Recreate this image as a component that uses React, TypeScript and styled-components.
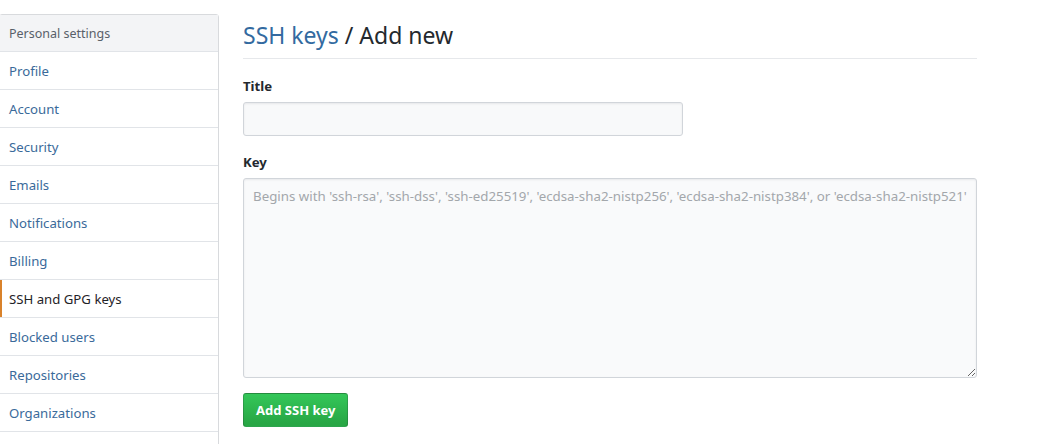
import styled, { createGlobalStyle } from "styled-components";

const GlobalStyle = createGlobalStyle`
  html, body {
    margin: 0;
    padding: 0;
    background: #fff;
  }
  body {
    font-family: "Noto Sans", "Open Sans", sans-serif;
    font-size: 13px;
    color: #24292e;
    overflow: hidden;
  }
`;

const Page = styled.div`
  display: flex;
  align-items: flex-start;
  padding-top: 14px;
  width: 1060px;
  height: 444px;
  box-sizing: border-box;
  overflow: hidden;
`;

const Menu = styled.nav`
  flex: none;
  width: 220px;
  margin-left: -1px;
  border: 1px solid #d8dadd;
  border-radius: 3px;
  box-sizing: border-box;
  background: #fff;
`;

const MenuHeading = styled.div`
  height: 37px;
  padding: 0 9px;
  display: flex;
  align-items: center;
  font-size: 12.5px;
  color: #586069;
  background: #f3f4f6;
  border-bottom: 1px solid #e1e4e8;
  box-sizing: border-box;
`;

const MenuItem = styled.a<{ $selected?: boolean }>`
  position: relative;
  display: flex;
  align-items: center;
  height: 38px;
  padding: 0 9px;
  box-sizing: border-box;
  border-bottom: 1px solid #e1e4e8;
  color: ${(p) => (p.$selected ? "#1f2328" : "#3a6a9a")};
  text-decoration: none;
  font-size: 13.2px;
  cursor: pointer;

  &::before {
    content: "";
    display: ${(p) => (p.$selected ? "block" : "none")};
    position: absolute;
    left: 0;
    top: 0;
    bottom: 0;
    width: 2px;
    background: #d9822b;
  }
`;

const Main = styled.main`
  flex: none;
  width: 734px;
  margin-left: 24px;
`;

const Subhead = styled.div`
  padding-top: 6px;
  padding-bottom: 8px;
  border-bottom: 1px solid #e6e8eb;
`;

const Heading = styled.h2`
  margin: 0;
  font-size: 23px;
  font-weight: 400;
  line-height: 30px;
  color: #24292e;
`;

const HeadingLink = styled.a`
  color: #336aa0;
  text-decoration: none;
`;

const FormGroup = styled.dl<{ $top: number }>`
  margin: ${(p) => p.$top}px 0 0;
`;

const Label = styled.dt`
  font-size: 13.2px;
  font-weight: 700;
  line-height: 20px;
  margin-bottom: 6px;
  color: #24292e;
`;

const Field = styled.dd`
  margin: 0;
`;

const TextInput = styled.input`
  display: block;
  width: 440px;
  height: 34px;
  box-sizing: border-box;
  padding: 6px 8px;
  font: inherit;
  font-size: 13px;
  background: #f8f9fa;
  border: 1px solid #d1d5da;
  border-radius: 3px;
  box-shadow: inset 0 1px 2px rgba(27, 31, 35, 0.075);
  outline: none;
`;

const TextArea = styled.textarea`
  display: block;
  width: 734px;
  height: 200px;
  box-sizing: border-box;
  padding: 7px 9px;
  font-family: inherit;
  font-size: 13.3px;
  line-height: 20px;
  background: #f9fafb;
  border: 1px solid #d1d5da;
  border-radius: 3px;
  box-shadow: inset 0 1px 2px rgba(27, 31, 35, 0.075);
  outline: none;
  resize: both;

  &::placeholder {
    color: #a3a7ab;
  }
`;

const Button = styled.button`
  display: block;
  margin-top: 15px;
  height: 34px;
  padding: 0 12px;
  font-family: inherit;
  font-size: 13px;
  font-weight: 700;
  color: #fff;
  background: linear-gradient(-180deg, #34c759 0%, #28a745 90%);
  border: 1px solid rgba(27, 31, 35, 0.2);
  border-radius: 3px;
  cursor: pointer;
`;

const items = [
  "Profile",
  "Account",
  "Security",
  "Emails",
  "Notifications",
  "Billing",
  "SSH and GPG keys",
  "Blocked users",
  "Repositories",
  "Organizations",
  "Saved replies",
];

export default function App() {
  return (
    <>
      <GlobalStyle />
      <Page>
        <Menu>
          <MenuHeading>Personal settings</MenuHeading>
          {items.map((item) => (
            <MenuItem key={item} $selected={item === "SSH and GPG keys"}>
              {item}
            </MenuItem>
          ))}
        </Menu>
        <Main>
          <Subhead>
            <Heading>
              <HeadingLink>SSH keys</HeadingLink> / Add new
            </Heading>
          </Subhead>
          <FormGroup $top={17}>
            <Label>Title</Label>
            <Field>
              <TextInput type="text" />
            </Field>
          </FormGroup>
          <FormGroup $top={16}>
            <Label>Key</Label>
            <Field>
              <TextArea placeholder="Begins with 'ssh-rsa', 'ssh-dss', 'ssh-ed25519', 'ecdsa-sha2-nistp256', 'ecdsa-sha2-nistp384', or 'ecdsa-sha2-nistp521'" />
            </Field>
          </FormGroup>
          <Button>Add SSH key</Button>
        </Main>
      </Page>
    </>
  );
}
